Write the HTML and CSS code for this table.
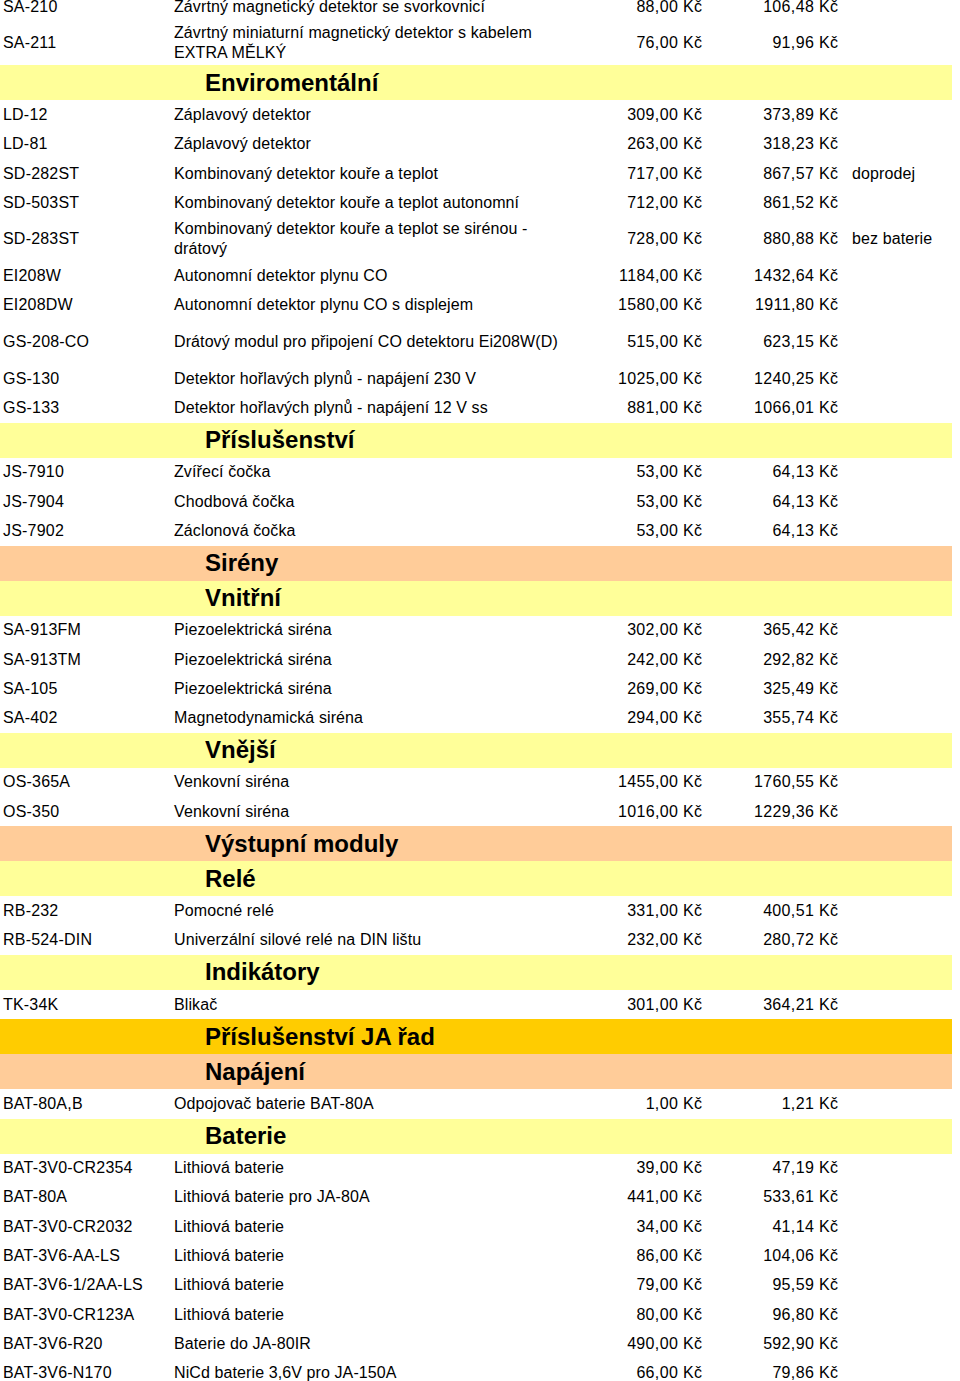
FILE: index.html
```html
<!DOCTYPE html>
<html lang="cs">
<head>
<meta charset="utf-8">
<title>Ceník</title>
<link rel="stylesheet" href="styles.css">
</head>
<body>
<div class="sheet">
  <div class="row"><span class="code">SA-210</span><span class="desc">Závrtný magnetický detektor se svorkovnicí</span><span class="price">88,00 Kč</span><span class="price">106,48 Kč</span><span class="note"></span></div>
  <div class="row tall"><span class="code">SA-211</span><span class="desc">Závrtný miniaturní magnetický detektor s kabelem EXTRA MĚLKÝ</span><span class="price">76,00 Kč</span><span class="price">91,96 Kč</span><span class="note"></span></div>

  <div class="band yellow"><h2>Enviromentální</h2></div>
  <div class="row"><span class="code">LD-12</span><span class="desc">Záplavový detektor</span><span class="price">309,00 Kč</span><span class="price">373,89 Kč</span><span class="note"></span></div>
  <div class="row"><span class="code">LD-81</span><span class="desc">Záplavový detektor</span><span class="price">263,00 Kč</span><span class="price">318,23 Kč</span><span class="note"></span></div>
  <div class="row"><span class="code">SD-282ST</span><span class="desc">Kombinovaný detektor kouře a teplot</span><span class="price">717,00 Kč</span><span class="price">867,57 Kč</span><span class="note">doprodej</span></div>
  <div class="row"><span class="code">SD-503ST</span><span class="desc">Kombinovaný detektor kouře a teplot autonomní</span><span class="price">712,00 Kč</span><span class="price">861,52 Kč</span><span class="note"></span></div>
  <div class="row tall"><span class="code">SD-283ST</span><span class="desc">Kombinovaný detektor kouře a teplot se sirénou - drátový</span><span class="price">728,00 Kč</span><span class="price">880,88 Kč</span><span class="note">bez baterie</span></div>
  <div class="row"><span class="code">EI208W</span><span class="desc">Autonomní detektor plynu CO</span><span class="price">1184,00 Kč</span><span class="price">1432,64 Kč</span><span class="note"></span></div>
  <div class="row"><span class="code">EI208DW</span><span class="desc">Autonomní detektor plynu CO s displejem</span><span class="price">1580,00 Kč</span><span class="price">1911,80 Kč</span><span class="note"></span></div>
  <div class="row tall"><span class="code">GS-208-CO</span><span class="desc">Drátový modul pro připojení CO detektoru Ei208W(D)</span><span class="price">515,00 Kč</span><span class="price">623,15 Kč</span><span class="note"></span></div>
  <div class="row"><span class="code">GS-130</span><span class="desc">Detektor hořlavých plynů - napájení 230 V</span><span class="price">1025,00 Kč</span><span class="price">1240,25 Kč</span><span class="note"></span></div>
  <div class="row"><span class="code">GS-133</span><span class="desc">Detektor hořlavých plynů - napájení 12 V ss</span><span class="price">881,00 Kč</span><span class="price">1066,01 Kč</span><span class="note"></span></div>

  <div class="band yellow"><h2>Příslušenství</h2></div>
  <div class="row"><span class="code">JS-7910</span><span class="desc">Zvířecí čočka</span><span class="price">53,00 Kč</span><span class="price">64,13 Kč</span><span class="note"></span></div>
  <div class="row"><span class="code">JS-7904</span><span class="desc">Chodbová čočka</span><span class="price">53,00 Kč</span><span class="price">64,13 Kč</span><span class="note"></span></div>
  <div class="row"><span class="code">JS-7902</span><span class="desc">Záclonová čočka</span><span class="price">53,00 Kč</span><span class="price">64,13 Kč</span><span class="note"></span></div>

  <div class="band peach"><h2>Sirény</h2></div>
  <div class="band yellow"><h2>Vnitřní</h2></div>
  <div class="row"><span class="code">SA-913FM</span><span class="desc">Piezoelektrická siréna</span><span class="price">302,00 Kč</span><span class="price">365,42 Kč</span><span class="note"></span></div>
  <div class="row"><span class="code">SA-913TM</span><span class="desc">Piezoelektrická siréna</span><span class="price">242,00 Kč</span><span class="price">292,82 Kč</span><span class="note"></span></div>
  <div class="row"><span class="code">SA-105</span><span class="desc">Piezoelektrická siréna</span><span class="price">269,00 Kč</span><span class="price">325,49 Kč</span><span class="note"></span></div>
  <div class="row"><span class="code">SA-402</span><span class="desc">Magnetodynamická siréna</span><span class="price">294,00 Kč</span><span class="price">355,74 Kč</span><span class="note"></span></div>

  <div class="band yellow"><h2>Vnější</h2></div>
  <div class="row"><span class="code">OS-365A</span><span class="desc">Venkovní siréna</span><span class="price">1455,00 Kč</span><span class="price">1760,55 Kč</span><span class="note"></span></div>
  <div class="row"><span class="code">OS-350</span><span class="desc">Venkovní siréna</span><span class="price">1016,00 Kč</span><span class="price">1229,36 Kč</span><span class="note"></span></div>

  <div class="band peach"><h2>Výstupní moduly</h2></div>
  <div class="band yellow"><h2>Relé</h2></div>
  <div class="row"><span class="code">RB-232</span><span class="desc">Pomocné relé</span><span class="price">331,00 Kč</span><span class="price">400,51 Kč</span><span class="note"></span></div>
  <div class="row"><span class="code">RB-524-DIN</span><span class="desc">Univerzální silové relé na DIN lištu</span><span class="price">232,00 Kč</span><span class="price">280,72 Kč</span><span class="note"></span></div>

  <div class="band yellow"><h2>Indikátory</h2></div>
  <div class="row"><span class="code">TK-34K</span><span class="desc">Blikač</span><span class="price">301,00 Kč</span><span class="price">364,21 Kč</span><span class="note"></span></div>

  <div class="band gold"><h2>Příslušenství JA řad</h2></div>
  <div class="band peach"><h2>Napájení</h2></div>
  <div class="row"><span class="code">BAT-80A,B</span><span class="desc">Odpojovač baterie BAT-80A</span><span class="price">1,00 Kč</span><span class="price">1,21 Kč</span><span class="note"></span></div>

  <div class="band yellow"><h2>Baterie</h2></div>
  <div class="row"><span class="code">BAT-3V0-CR2354</span><span class="desc">Lithiová baterie</span><span class="price">39,00 Kč</span><span class="price">47,19 Kč</span><span class="note"></span></div>
  <div class="row"><span class="code">BAT-80A</span><span class="desc">Lithiová baterie pro JA-80A</span><span class="price">441,00 Kč</span><span class="price">533,61 Kč</span><span class="note"></span></div>
  <div class="row"><span class="code">BAT-3V0-CR2032</span><span class="desc">Lithiová baterie</span><span class="price">34,00 Kč</span><span class="price">41,14 Kč</span><span class="note"></span></div>
  <div class="row"><span class="code">BAT-3V6-AA-LS</span><span class="desc">Lithiová baterie</span><span class="price">86,00 Kč</span><span class="price">104,06 Kč</span><span class="note"></span></div>
  <div class="row"><span class="code">BAT-3V6-1/2AA-LS</span><span class="desc">Lithiová baterie</span><span class="price">79,00 Kč</span><span class="price">95,59 Kč</span><span class="note"></span></div>
  <div class="row"><span class="code">BAT-3V0-CR123A</span><span class="desc">Lithiová baterie</span><span class="price">80,00 Kč</span><span class="price">96,80 Kč</span><span class="note"></span></div>
  <div class="row"><span class="code">BAT-3V6-R20</span><span class="desc">Baterie do JA-80IR</span><span class="price">490,00 Kč</span><span class="price">592,90 Kč</span><span class="note"></span></div>
  <div class="row"><span class="code">BAT-3V6-N170</span><span class="desc">NiCd baterie 3,6V pro JA-150A</span><span class="price">66,00 Kč</span><span class="price">79,86 Kč</span><span class="note"></span></div>
</div>
</body>
</html>
```

FILE: styles.css
```css
html, body {
  margin: 0;
  padding: 0;
  background: #ffffff;
}

body {
  font-family: "Liberation Sans", Arial, sans-serif;
  font-size: 16px;
  color: #000000;
}

.sheet {
  width: 952px;
  margin-top: -8px;
}

.row {
  display: grid;
  grid-template-columns: 174px 400px 128px 136px 1fr;
  align-items: center;
  height: 29.3px;
  line-height: 20px;
  letter-spacing: 0.1px;
}

.row.tall {
  height: 44px;
}

.code {
  padding-left: 3px;
  white-space: nowrap;
  letter-spacing: 0.2px;
}

.desc {
  padding-right: 10px;
}

.price {
  text-align: right;
  white-space: nowrap;
  letter-spacing: 0.35px;
}

.price:nth-child(3),
.price:nth-child(4) {
  margin-right: -0.35px;
}

.note {
  padding-left: 14px;
  white-space: nowrap;
}

.band {
  height: 35px;
  display: flex;
  align-items: center;
  padding-left: 205px;
}

.band h2 {
  margin: 0;
  font-size: 24px;
  font-weight: bold;
  line-height: 1;
}

.yellow {
  background: #ffff99;
}

.peach {
  background: #ffcc99;
}

.gold {
  background: #ffcc00;
}
```
